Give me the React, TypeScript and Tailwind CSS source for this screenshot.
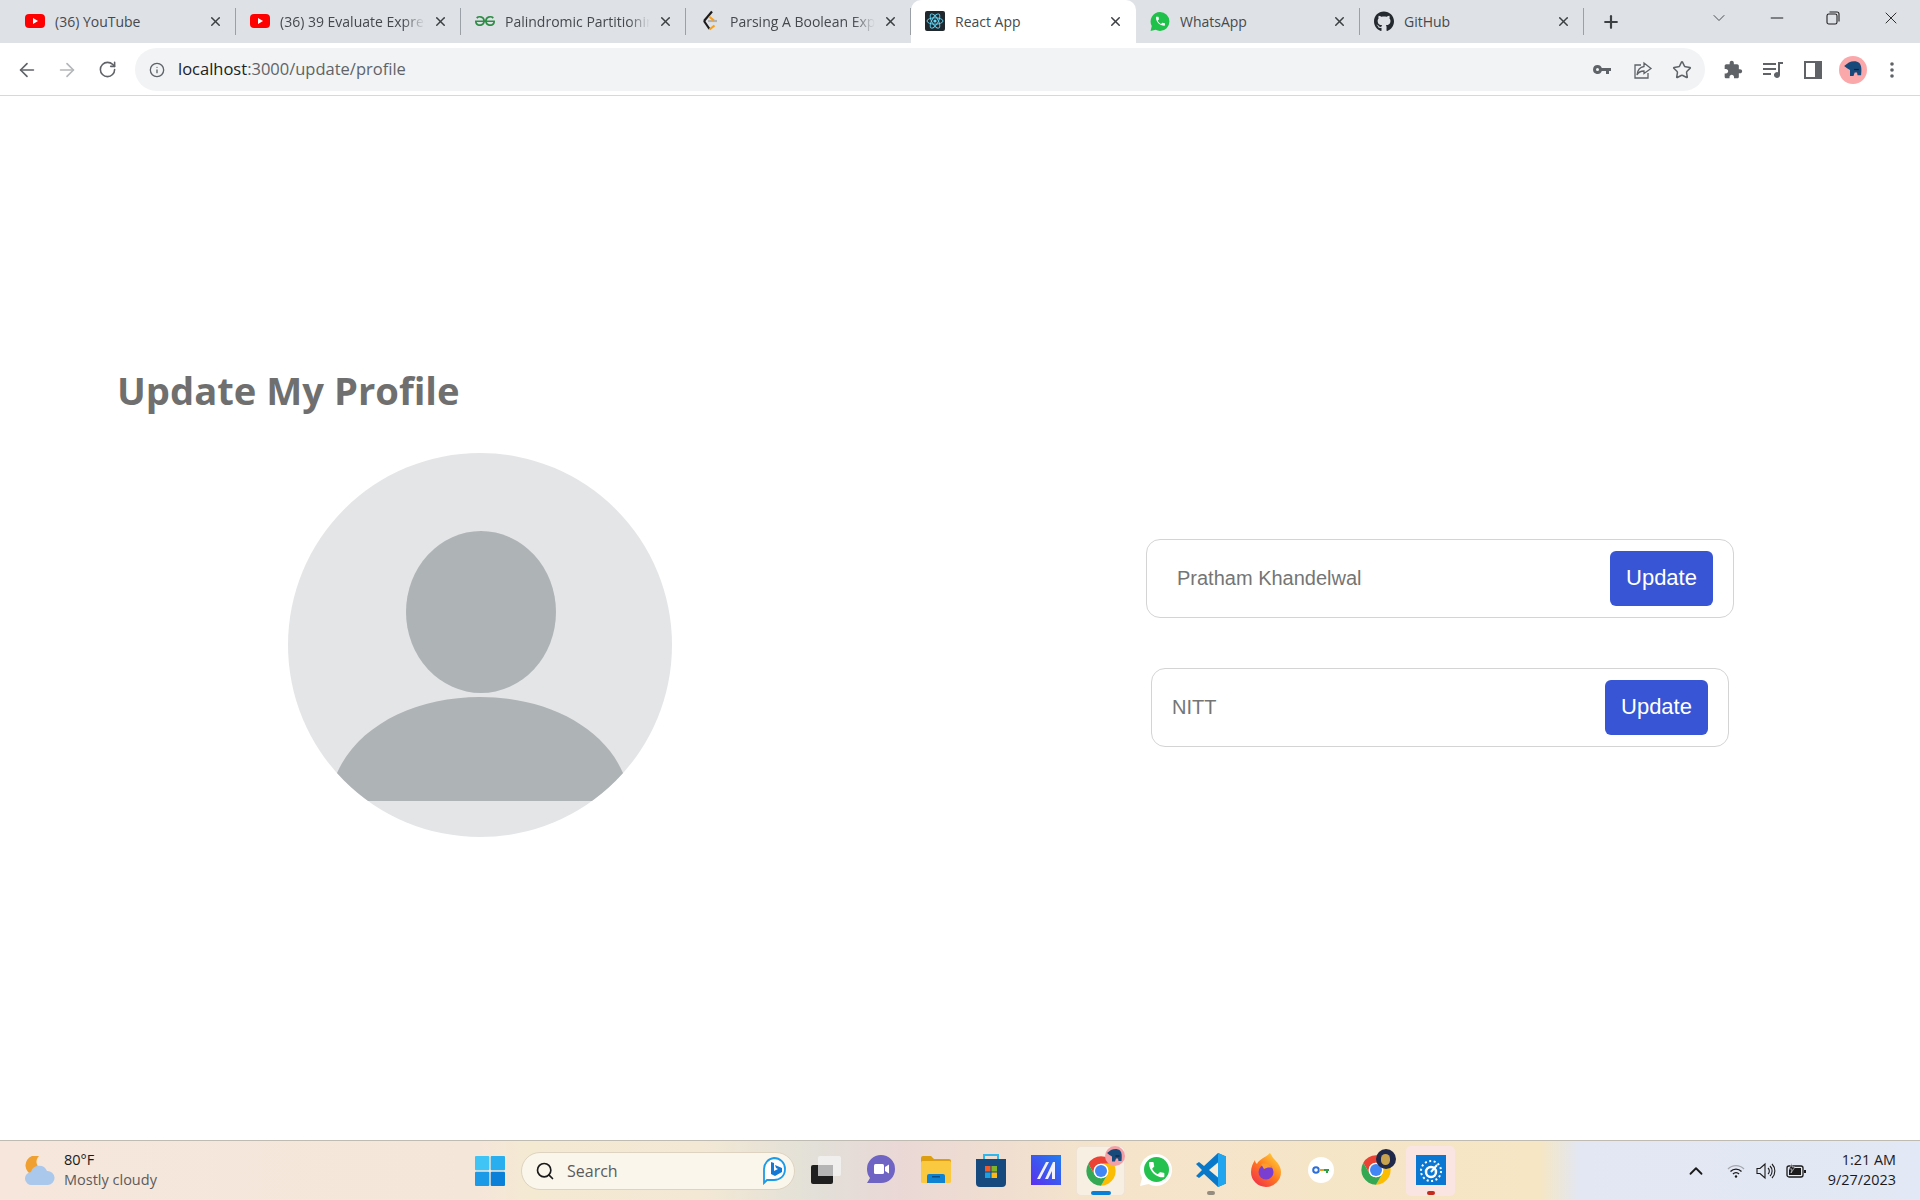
import { ArrowLeft, ArrowRight, ChevronDown, ChevronUp, Info, Minus, Plus, RotateCw, Search, Star, X } from 'lucide-react';
import { FaGithub } from 'react-icons/fa';
import { SiGeeksforgeeks } from 'react-icons/si';
import type { ReactNode } from 'react';

const YouTubeIcon = () => (
  <svg width="20" height="20" viewBox="0 0 20 20">
    <rect x="0" y="3" width="20" height="14" rx="4" fill="#f00" />
    <path d="M8 7l5 3-5 3z" fill="#fff" />
  </svg>
);

const ReactIcon = () => (
  <svg width="20" height="20" viewBox="0 0 20 20">
    <rect width="20" height="20" rx="2" fill="#20282e" />
    <g fill="none" stroke="#61dafb" strokeWidth="0.9">
      <ellipse cx="10" cy="10" rx="8" ry="3.2" />
      <ellipse cx="10" cy="10" rx="8" ry="3.2" transform="rotate(60 10 10)" />
      <ellipse cx="10" cy="10" rx="8" ry="3.2" transform="rotate(120 10 10)" />
    </g>
    <circle cx="10" cy="10" r="1.6" fill="#61dafb" />
  </svg>
);

const LeetCodeIcon = () => (
  <svg width="20" height="22" viewBox="0 0 20 22" fill="none" strokeWidth="2.2">
    <path d="M12 1.5L4 11" stroke="#1a1a1a" />
    <path d="M4 11l5.5 8" stroke="#1a1a1a" />
    <path d="M9.5 19.5l5-4" stroke="#f89f1b" />
    <path d="M8 11h9" stroke="#b3b3b3" />
    <path d="M9 6.5l5 4" stroke="#f89f1b" />
  </svg>
);

const WhatsAppLogo = ({ size, ring }: { size: number; ring?: boolean }) => (
  <svg width={size} height={size} viewBox="0 0 34 34">
    <path d="M17 1a16 16 0 0 1 0 32 16 16 0 0 1-7.500-1.900L1 33l2-8.200A16 16 0 0 1 17 1z" fill={ring ? '#fff' : '#1fc14a'} />
    {ring && <circle cx="17.500" cy="16.500" r="12.500" fill="#25c14f" />}
    <g transform="translate(7.500 6.500) scale(0.85)">
      <path
        d="M6.620 10.790c1.440 2.830 3.760 5.140 6.590 6.590l2.200-2.200c.27-.27.67-.36 1.020-.24 1.120.37 2.330.57 3.570.57.55 0 1 .45 1 1V20c0 .55-.45 1-1 1-9.390 0-17-7.610-17-17 0-.55.45-1 1-1h3.500c.55 0 1 .45 1 1 0 1.250.2 2.450.57 3.570.11.35.03.74-.25 1.020l-2.200 2.200z"
        fill="#fff"
      />
    </g>
  </svg>
);

type TabItem = { title: string; icon: ReactNode; active?: boolean; fade?: boolean; narrow?: boolean };

const tabs: TabItem[] = [
  { title: '(36) YouTube', icon: <YouTubeIcon /> },
  { title: '(36) 39 Evaluate Expression Recursively', icon: <YouTubeIcon />, fade: true },
  { title: 'Palindromic Partitioning', icon: <SiGeeksforgeeks size={20} color="#2f8d46" />, fade: true },
  { title: 'Parsing A Boolean Expression', icon: <LeetCodeIcon />, fade: true },
  { title: 'React App', icon: <ReactIcon />, active: true },
  { title: 'WhatsApp', icon: <WhatsAppLogo size={21} />, narrow: true },
  { title: 'GitHub', icon: <FaGithub size={21} color="#24292f" />, narrow: true },
];

const ChromeLogo = ({ size = 32 }: { size?: number }) => (
  <svg width={size} height={size} viewBox="0 0 48 48">
    <path d="M4.95 13A22 22 0 0 1 43.05 13H24A11 11 0 0 0 14.5 29.5Z" fill="#ea4335" />
    <path d="M43.05 13A22 22 0 0 1 24 46L33.5 29.5A11 11 0 0 0 24 13Z" fill="#fbbc04" />
    <path d="M24 46A22 22 0 0 1 4.95 13L14.5 29.5A11 11 0 0 0 33.5 29.5Z" fill="#34a853" />
    <circle cx="24" cy="24" r="11" fill="#fff" />
    <circle cx="24" cy="24" r="9" fill="#4285f4" />
  </svg>
);

const Elephant = ({ size = 18 }: { size?: number }) => (
  <svg width={size} height={size} viewBox="0 0 18 18">
    <path d="M1 6l4-3c3-1.500 7-1.500 9 .5 2 2 2 6 1.500 10.500h-3l-.5-2.500h-2L9 14.500H6L6 9.500 3.500 8z" fill="#17497a" />
    <path d="M9.500 9h4" stroke="#0b1f33" strokeWidth="1" />
  </svg>
);

function Tab({ tab }: { tab: TabItem }) {
  const box = tab.active
    ? 'flex h-full w-[225px] items-center rounded-t-[10px] bg-white pb-[1px] pl-[14px] pr-[13px]'
    : tab.narrow
      ? 'flex h-full w-[224px] items-center border-r border-[#9aa0a6] pb-[1px] pl-[14px] pr-[12px] [border-image:linear-gradient(to_bottom,transparent_21%,#9aa0a6_21%,#9aa0a6_79%,transparent_79%)_1]'
      : 'flex h-full w-[225px] items-center border-r border-[#9aa0a6] pb-[1px] pl-[14px] pr-[12px] [border-image:linear-gradient(to_bottom,transparent_21%,#9aa0a6_21%,#9aa0a6_79%,transparent_79%)_1]';
  return (
    <div className={box}>
      <span className="flex w-[20px] shrink-0 items-center justify-center">{tab.icon}</span>
      <span
        className={
          tab.fade
            ? 'ml-[10px] min-w-0 flex-1 overflow-hidden whitespace-nowrap text-[14px] text-[#45494e] [mask-image:linear-gradient(to_right,black_85%,transparent)]'
            : 'ml-[10px] min-w-0 flex-1 overflow-hidden whitespace-nowrap text-[14px] text-[#45494e]'
        }
      >
        {tab.title}
      </span>
      <X size={15} strokeWidth={2.4} className="ml-[8px] shrink-0 text-[#3c4043]" />
    </div>
  );
}

function TabStrip() {
  return (
    <div className="flex h-[43px] items-stretch bg-[#dee1e6] pl-[11px]">
      {tabs.map((t) => (
        <Tab key={t.title} tab={t} />
      ))}
      <div className="ml-[14px] flex w-[26px] items-center justify-center">
        <Plus size={20} strokeWidth={2.6} className="text-[#3c4043]" />
      </div>
      <div className="ml-[82px] flex w-[26px] items-center justify-center pb-[7px]">
        <ChevronDown size={20} strokeWidth={1.1} className="text-[#3c4043]" />
      </div>
      <div className="ml-[32px] flex w-[26px] items-center justify-center pb-[7px]">
        <Minus size={20} strokeWidth={1.2} className="text-[#1f1f1f]" />
      </div>
      <div className="ml-[30px] flex w-[26px] items-center justify-center pb-[7px]">
        <svg width="14" height="14" viewBox="0 0 14 14" fill="none" stroke="#1f1f1f" strokeWidth="1.1">
          <rect x="1" y="3" width="10" height="10" rx="1.800" />
          <path d="M3.500 1h7.500a2 2 0 0 1 2 2v7.500" />
        </svg>
      </div>
      <div className="ml-[32px] flex w-[26px] items-center justify-center pb-[7px]">
        <X size={20} strokeWidth={1.1} className="text-[#1f1f1f]" />
      </div>
    </div>
  );
}

function Toolbar() {
  return (
    <div className="flex h-[53px] items-start border-b border-[#d8d8d8] bg-white pt-[5px]">
      <div className="flex h-[43px] items-center pl-[16px]">
        <ArrowLeft size={22} strokeWidth={1.8} className="text-[#5f6368]" />
        <ArrowRight size={22} strokeWidth={1.8} className="ml-[18px] text-[#b4b6b9]" />
        <RotateCw size={19} strokeWidth={2} className="ml-[20px] text-[#5f6368]" />
      </div>
      <div className="ml-[18px] flex h-[43px] w-[1570px] items-center rounded-full bg-[#f1f3f4] pl-[14px]">
        <Info size={16} strokeWidth={2} className="text-[#5f6368]" />
        <span className="ml-[13px] text-[16.5px] leading-none text-[#5f6368]">
          <span className="text-[#202124]">localhost</span>:3000/update/profile
        </span>
        <div className="ml-auto flex items-center pr-[13px]">
          <svg width="18" height="10" viewBox="0 0 18 10" fill="#5f6368">
            <path d="M4.500 0a4.500 4.500 0 0 1 4.300 3H18v3h-2v3h-3V6H8.800A4.500 4.500 0 1 1 4.500 0zm0 3a1.500 1.500 0 1 0 0 3 1.500 1.500 0 0 0 0-3z" />
          </svg>
          <svg className="ml-[22px]" width="20" height="20" viewBox="0 0 20 20" fill="none" stroke="#5f6368" strokeWidth="1.300">
            <path d="M8 5H2v13h13v-5" />
            <path d="M11 3l7 5.500-7 5V11c-3 0-5.500 1-7 4 .5-4.500 3-8 7-8.500z" />
          </svg>
          <Star size={20} strokeWidth={1.8} className="ml-[19px] text-[#5f6368]" />
        </div>
      </div>
      <div className="flex h-[43px] items-center">
        <svg className="ml-[18px]" width="20" height="20" viewBox="0 0 24 24" fill="#5f6368">
          <path d="M20.500 11H19V7c0-1.100-.9-2-2-2h-4V3.500C13 2.120 11.880 1 10.500 1S8 2.120 8 3.500V5H4c-1.100 0-1.990.9-1.990 2v3.800H3.500c1.490 0 2.700 1.210 2.700 2.700s-1.210 2.700-2.700 2.700H2V20c0 1.100.9 2 2 2h3.800v-1.500c0-1.490 1.210-2.700 2.700-2.700 1.490 0 2.700 1.210 2.700 2.700V22H17c1.100 0 2-.9 2-2v-4h1.500c1.380 0 2.500-1.120 2.500-2.500S21.880 11 20.500 11z" />
        </svg>
        <svg className="ml-[20px]" width="20" height="18" viewBox="0 0 20 18" fill="#5f6368">
          <path d="M0 2h13v2H0zM0 7h13v2H0zM0 12h8v2H0z" />
          <path d="M15 1h5v2h-3v11a3 3 0 1 1-2-2.800z" />
        </svg>
        <svg className="ml-[21px]" width="18" height="18" viewBox="0 0 18 18">
          <rect width="18" height="18" fill="#5f6368" />
          <rect x="2" y="2" width="9" height="14" fill="#fff" />
        </svg>
        <div className="ml-[17px] flex h-[28px] w-[28px] items-center justify-center rounded-full bg-[#fba8ab]">
          <Elephant size={21} />
        </div>
        <svg className="ml-[22px]" width="6" height="18" viewBox="0 0 6 18" fill="#5f6368">
          <circle cx="3" cy="3" r="1.800" />
          <circle cx="3" cy="9" r="1.800" />
          <circle cx="3" cy="15" r="1.800" />
        </svg>
      </div>
    </div>
  );
}

function Avatar() {
  return (
    <svg width="384" height="384" viewBox="0 0 384 384" className="shrink-0">
      <defs>
        <clipPath id="avatar-clip">
          <circle cx="192" cy="192" r="192" />
        </clipPath>
      </defs>
      <circle cx="192" cy="192" r="192" fill="#e4e5e7" />
      <ellipse cx="193" cy="159" rx="75" ry="81" fill="#aeb3b6" />
      <path
        d="M49 320C70 272 128 244 192 244S314 272 335 320V348H49Z"
        fill="#aeb3b6"
        clipPath="url(#avatar-clip)"
      />
    </svg>
  );
}

function UpdateField({ placeholder, wide }: { placeholder: string; wide?: boolean }) {
  return (
    <div
      className={
        wide
          ? 'flex h-[79px] w-[588px] items-center rounded-[14px] border border-[#d4d4d4] pl-[30px] pr-[20px]'
          : 'flex h-[79px] w-[578px] items-center rounded-[14px] border border-[#d4d4d4] pl-[20px] pr-[20px]'
      }
    >
      <input
        placeholder={placeholder}
        className="min-w-0 flex-1 bg-transparent pb-[2px] text-[20px] outline-none placeholder:text-[#757575]"
      />
      <button className="h-[55px] w-[103px] rounded-[6px] bg-[#3755d4] pb-[2px] text-[22px] text-white">Update</button>
    </div>
  );
}

const WindowsLogo = () => (
  <svg width="30" height="30" viewBox="0 0 30 30">
    <rect width="14.300" height="14.300" rx="1" fill="#3fc4f5" />
    <rect x="15.700" width="14.300" height="14.300" rx="1" fill="#29aef0" />
    <rect y="15.700" width="14.300" height="14.300" rx="1" fill="#1b9ae8" />
    <rect x="15.700" y="15.700" width="14.300" height="14.300" rx="1" fill="#0b80d8" />
  </svg>
);

const BingLogo = () => (
  <svg width="24" height="28" viewBox="0 0 24 28">
    <path d="M12 1a11 11 0 0 1 11 11c0 7-5 11-11 11H5l-3 3v-14A11 11 0 0 1 12 1z" fill="#fff" stroke="#1b9be8" strokeWidth="1.800" />
    <path d="M9 5l3 1v8l4-2-2-1-1-3 7 3v4l-7 4-4-2z" fill="#1479d4" />
  </svg>
);

const taskIcons: { id: string; node: ReactNode; box?: string; bar?: string }[] = [
  {
    id: 'taskview',
    node: (
      <svg width="30" height="28" viewBox="0 0 30 28">
        <rect x="0" y="9" width="22" height="19" rx="2" fill="#1f1f1f" />
        <rect x="7" y="0" width="23" height="20" rx="2" fill="#f2f2f2" fillOpacity="0.85" />
        <rect x="7" y="9" width="15" height="11" fill="#b5b5b5" />
      </svg>
    ),
  },
  {
    id: 'teams',
    node: (
      <svg width="30" height="32" viewBox="0 0 30 32">
        <path d="M15 1a14 14 0 0 1 14 14c0 8-6 14-14 14H1l3-5a14 14 0 0 1-3-9A14 14 0 0 1 15 1z" fill="#6f63c4" />
        <rect x="8" y="10" width="10" height="10" rx="1.500" fill="#fff" />
        <path d="M19 13l4-2.500v9L19 17z" fill="#fff" />
      </svg>
    ),
  },
  {
    id: 'files',
    node: (
      <svg width="30" height="27" viewBox="0 0 30 27">
        <path d="M0 2a2 2 0 0 1 2-2h8l3 3h15a2 2 0 0 1 2 2v3H0z" fill="#dc9f12" />
        <rect y="5" width="30" height="22" rx="1.500" fill="#fbc93f" />
        <path d="M6 27v-7a2 2 0 0 1 2-2h14a2 2 0 0 1 2 2v7z" fill="#0f82d2" />
        <rect x="11" y="20" width="8" height="1.500" fill="#0b4f8a" />
      </svg>
    ),
  },
  {
    id: 'store',
    node: (
      <svg width="30" height="34" viewBox="0 0 30 34">
        <path d="M8 8V2h14v6" fill="none" stroke="#2fb6ea" strokeWidth="2" />
        <path d="M0 6h30v24a4 4 0 0 1-4 4H4a4 4 0 0 1-4-4z" fill="#164a7e" />
        <rect x="9" y="13" width="5.500" height="5.500" fill="#f05a28" />
        <rect x="15.500" y="13" width="5.500" height="5.500" fill="#7db42c" />
        <rect x="9" y="19.500" width="5.500" height="5.500" fill="#1ba0e2" />
        <rect x="15.500" y="19.500" width="5.500" height="5.500" fill="#fdb813" />
      </svg>
    ),
  },
  {
    id: 'mail',
    node: (
      <svg width="30" height="30" viewBox="0 0 30 30">
        <defs>
          <linearGradient id="mail-bg" x1="0" y1="1" x2="1" y2="0">
            <stop offset="0" stopColor="#5b2ff0" />
            <stop offset="1" stopColor="#1e7fef" />
          </linearGradient>
        </defs>
        <rect width="30" height="30" fill="url(#mail-bg)" />
        <path d="M6 24L15 7h3L9 24zM14 24l8-17h2v17h-3v-8l-4 8z" fill="#f1f1ff" />
      </svg>
    ),
  },
  {
    id: 'chrome',
    box: 'bg-[#f8efe3] border border-[#eee3d5]',
    bar: 'w-[20px] bg-[#0a7fd6]',
    node: (
      <div className="relative pt-[3px]">
        <ChromeLogo size={32} />
        <div className="absolute -right-[8px] -top-[6px] flex h-[20px] w-[20px] items-center justify-center rounded-full bg-[#f2a0a6]">
          <Elephant />
        </div>
      </div>
    ),
  },
  { id: 'whatsapp', node: <WhatsAppLogo size={34} ring /> },
  {
    id: 'vscode',
    bar: 'w-[8px] bg-[#948d7f]',
    node: (
      <svg width="30" height="34" viewBox="0 0 30 34">
        <path d="M22 0l8 3.500v27L22 34 8 21l-5 4-3-2 6-6-6-6 3-2 5 4z" fill="#0a78c9" />
        <path d="M22 0l8 3.500v27L22 34z" fill="#22a5ef" />
        <path d="M22 9.500L13 17l9 7.500z" fill="#f6ecd8" />
      </svg>
    ),
  },
  {
    id: 'firefox',
    node: (
      <svg width="30" height="34" viewBox="0 0 30 34">
        <defs>
          <linearGradient id="fox" x1="0.900" y1="0" x2="0.100" y2="1">
            <stop offset="0" stopColor="#ffd93b" />
            <stop offset="0.500" stopColor="#ff7a1f" />
            <stop offset="1" stopColor="#f0284f" />
          </linearGradient>
        </defs>
        <path d="M19 0c2 3 3 5 5 7 4 4 6 8 6 12a15 15 0 0 1-30 0c0-5 2-9 4-12 0 2 1 3 2 4 2-5 8-6 13-11z" fill="url(#fox)" />
        <circle cx="15" cy="19" r="7.500" fill="#7a3fd0" />
        <path d="M10 11c4-2 9 0 11 4-3-1-6 0-8 1z" fill="#ff9a2e" />
      </svg>
    ),
  },
  {
    id: 'key',
    node: (
      <div className="flex h-[26px] w-[26px] items-center justify-center rounded-full bg-white">
        <svg width="18" height="10" viewBox="0 0 18 10" fill="none">
          <circle cx="4" cy="5" r="2.800" stroke="#2c6fd9" strokeWidth="2" />
          <path d="M7 5h5" stroke="#f0a020" strokeWidth="2" />
          <path d="M12 5h5M15 5v3" stroke="#2f9e4a" strokeWidth="2" />
        </svg>
      </div>
    ),
  },
  {
    id: 'chrome2',
    node: (
      <div className="relative">
        <ChromeLogo size={32} />
        <div className="absolute -right-[4px] -top-[5px] h-[20px] w-[20px] rounded-full bg-[#20294a]">
          <div className="ml-[5px] mt-[5px] h-[11px] w-[9px] rounded-full bg-[#c9a24f]" />
        </div>
      </div>
    ),
  },
  {
    id: 'speedo',
    box: 'bg-[#fae5e3]',
    bar: 'w-[8px] bg-[#c42b1c]',
    node: (
      <svg width="30" height="30" viewBox="0 0 30 30">
        <rect width="30" height="30" fill="#0a78d2" />
        <circle cx="15" cy="16" r="10" fill="none" stroke="#fff" strokeWidth="2" strokeDasharray="2 2.500" />
        <circle cx="15" cy="17" r="5" fill="none" stroke="#fff" strokeWidth="2.500" />
        <path d="M15 17l6-7" stroke="#fff" strokeWidth="2" />
      </svg>
    ),
  },
];

function TaskIcon({ item }: { item: (typeof taskIcons)[number] }) {
  return (
    <div className="relative flex h-[50px] w-[49px] items-center justify-center rounded-[4px] pb-[2px]">
      {item.box && <div className={`absolute inset-0 rounded-[5px] ${item.box}`} />}
      <div className="relative">{item.node}</div>
      {item.bar && <div className={`absolute bottom-[1px] h-[4px] rounded-full ${item.bar}`} />}
    </div>
  );
}

function Taskbar() {
  return (
    <div className="flex h-[60px] shrink-0 items-center border-t border-[#bfbab2] bg-[linear-gradient(to_right,#f6e6dc_0,#f5e6da_480px,#f4ead2_530px,#f3e8d4_700px,#e2e0d8_815px,#ead8d6_900px,#f5e4cb_1100px,#f6e6c4_1540px,#e2e7f3_1580px,#e2e8f5_1920px)]">
      <div className="ml-[25px] flex w-[30px] shrink-0 justify-center">
        <svg width="30" height="30" viewBox="0 0 30 30">
          <path d="M14 0a8 8 0 0 0 2 13 8 8 0 0 1-13 3A10 10 0 0 1 14 0z" fill="#f0a030" />
          <path d="M7 29a6.500 6.500 0 0 1-1-13 8.500 8.500 0 0 1 16-1 7 7 0 0 1 1 14z" fill="#a9c8ec" />
        </svg>
      </div>
      <div className="ml-[9px] w-[120px] pb-[2px] text-[14.5px] leading-[20px]">
        <div className="text-[#1a1a1a]">80°F</div>
        <div className="text-[#5b5b5b]">Mostly cloudy</div>
      </div>
      <div className="ml-[291px]">
        <WindowsLogo />
      </div>
      <div className="ml-[16px] flex h-[38px] w-[274px] items-center rounded-full border border-[#ddd3c0] bg-[#fbf6eb] pl-[13px] pr-[8px]">
        <Search size={20} strokeWidth={2} className="text-[#1a1a1a]" />
        <span className="ml-[12px] text-[16px] text-[#5b5b5b]">Search</span>
        <div className="ml-auto">
          <BingLogo />
        </div>
      </div>
      <div className="ml-[6px] flex gap-[6px]">
        {taskIcons.map((t) => (
          <TaskIcon key={t.id} item={t} />
        ))}
      </div>
      <ChevronUp size={22} strokeWidth={2} className="ml-[230px] text-[#1a1a1a]" />
      <svg className="ml-[20px]" width="18" height="14" viewBox="0 0 18 14" fill="none" strokeWidth="1.300">
        <path d="M1 5a11 11 0 0 1 16 0" stroke="#a5a8ad" />
        <path d="M3.500 7.500a7.500 7.500 0 0 1 11 0" stroke="#1a1a1a" />
        <path d="M6 10a4 4 0 0 1 6 0" stroke="#1a1a1a" />
        <circle cx="9" cy="12.500" r="1.200" fill="#1a1a1a" />
      </svg>
      <svg className="ml-[11px]" width="20" height="18" viewBox="0 0 20 18" fill="none" stroke="#1a1a1a" strokeWidth="1.100">
        <path d="M1 6.500h3l5-4.500v14l-5-4.500H1z" />
        <path d="M12 6a4 4 0 0 1 0 6M14 4a7 7 0 0 1 0 10M16 2a10 10 0 0 1 0 14" />
      </svg>
      <svg className="ml-[10px]" width="20" height="16" viewBox="0 0 20 16">
        <rect x="1" y="3" width="16" height="11" rx="2" fill="none" stroke="#1a1a1a" strokeWidth="1.300" />
        <rect x="3" y="5" width="12" height="7" fill="#1a1a1a" />
        <rect x="18" y="7" width="2" height="3" fill="#1a1a1a" />
        <path d="M6 0L3 6h3l-1 4 4-6H6z" fill="#1a1a1a" stroke="#efeff5" strokeWidth="0.600" />
      </svg>
      <div className="ml-auto pb-[1px] pr-[24px] text-right text-[14.4px] leading-[20px] text-[#1a1a1a]">
        <div>1:21 AM</div>
        <div>9/27/2023</div>
      </div>
    </div>
  );
}

export default function App() {
  return (
    <div className="flex h-screen flex-col overflow-hidden bg-white font-['Open_Sans',sans-serif]">
      <TabStrip />
      <Toolbar />
      <main className="flex-1 pl-[117px] pt-[267px]">
        <h1 className="text-[38.2px] font-bold leading-[54px] text-[#6f6f6f]">Update My Profile</h1>
        <div className="mt-[36px] flex">
          <div className="ml-[171px]">
            <Avatar />
          </div>
          <div className="ml-[474px] flex flex-col items-center gap-[50px] pt-[86px] font-['Liberation_Sans',sans-serif]">
            <UpdateField placeholder="Pratham Khandelwal" wide />
            <UpdateField placeholder="NITT" />
          </div>
        </div>
      </main>
      <Taskbar />
    </div>
  );
}
